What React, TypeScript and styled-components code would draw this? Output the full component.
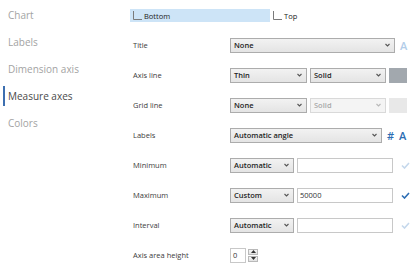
import React from 'react'
import styled, { createGlobalStyle } from 'styled-components'

const GlobalStyle = createGlobalStyle`
  html, body {
    margin: 0;
    padding: 0;
    background: #ffffff;
  }
  body {
    font-family: "Open Sans", "Liberation Sans", sans-serif;
  }
`

const Layout = styled.div`
  display: flex;
  width: 416px;
  height: 272px;
  overflow: hidden;
  background: #ffffff;
`

const Nav = styled.nav`
  width: 120px;
  flex-shrink: 0;
  padding-top: 2px;
  display: flex;
  flex-direction: column;
`

const NavItem = styled.div<{ $active?: boolean }>`
  position: relative;
  height: 27px;
  line-height: 27px;
  padding-left: 8px;
  font-size: 10px;
  color: ${props => (props.$active ? '#4a4a4a' : '#a3a3a3')};

  &::before {
    content: '';
    display: ${props => (props.$active ? 'block' : 'none')};
    position: absolute;
    left: 3px;
    top: 3px;
    width: 2px;
    height: 20px;
    background: #3d6fb0;
  }
`

const Panel = styled.section`
  flex: 1;
  padding-left: 10px;
  display: flex;
  flex-direction: column;
`

const TabRow = styled.div`
  display: flex;
  margin-top: 9px;
  height: 13px;
`

const Tab = styled.div<{ $selected?: boolean; $width: number }>`
  display: flex;
  align-items: center;
  gap: 2px;
  width: ${props => props.$width}px;
  padding-left: 3px;
  box-sizing: border-box;
  background: ${props => (props.$selected ? '#cde4f7' : 'transparent')};
  font-size: 7.5px;
  color: #222;
`

const Form = styled.div`
  display: grid;
  grid-template-columns: 100px 1fr;
  grid-auto-rows: 30px;
  margin-top: 8px;
`

const Label = styled.div`
  display: flex;
  align-items: center;
  padding-left: 3px;
  font-size: 7.5px;
  color: #3c3c3c;
`

const Controls = styled.div`
  display: flex;
  align-items: center;
  gap: 3px;
`

const Select = styled.div<{ $width: number; $disabled?: boolean }>`
  display: flex;
  align-items: center;
  justify-content: space-between;
  box-sizing: border-box;
  width: ${props => props.$width}px;
  height: 15px;
  padding: 0 4px 0 3px;
  border: 1px solid ${props => (props.$disabled ? '#d9d9d9' : '#acacac')};
  background: ${props =>
    props.$disabled ? '#f4f4f4' : 'linear-gradient(#f2f2f2, #e4e4e4)'};
  font-size: 7.5px;
  font-weight: 600;
  color: ${props => (props.$disabled ? '#a8a8a8' : '#1e1e1e')};
`

const TextInput = styled.div<{ $width: number }>`
  display: flex;
  align-items: center;
  box-sizing: border-box;
  width: ${props => props.$width}px;
  height: 15px;
  padding-left: 2px;
  border: 1px solid #c8c8c8;
  background: #ffffff;
  font-size: 7.5px;
  color: #333;
`

const Swatch = styled.div<{ $color: string }>`
  width: 18px;
  height: 15px;
  margin-left: 0;
  background: ${props => props.$color};
`

const Glyph = styled.span<{ $color: string }>`
  font-family: "Open Sans", "Liberation Sans", sans-serif;
  font-size: 11px;
  font-weight: 600;
  line-height: 15px;
  color: ${props => props.$color};
`

const SideIcon = styled.div`
  display: flex;
  align-items: center;
  gap: 5px;
  margin-left: 2px;
`

const Spinner = styled.div`
  display: flex;
  flex-direction: column;
  gap: 1px;
  margin-left: -1px;
`

const SpinButton = styled.div`
  display: flex;
  align-items: center;
  justify-content: center;
  width: 10px;
  height: 6px;
  box-sizing: border-box;
  border: 1px solid #b9b9b9;
  background: linear-gradient(#f6f6f6, #e2e2e2);
`

const Chevron = ({ color = '#555' }: { color?: string }) => (
  <svg width="5" height="4" viewBox="0 0 5 4">
    <polyline points="0.5,1 2.5,3 4.5,1" fill="none" stroke={color} strokeWidth="1.1" />
  </svg>
)

const Check = ({ color }: { color: string }) => (
  <svg width="9" height="7" viewBox="0 0 9 7" style={{ marginLeft: 5 }}>
    <polyline points="1,3.5 3.5,6 8,1" fill="none" stroke={color} strokeWidth="1.6" />
  </svg>
)

const Corner = () => (
  <svg width="9" height="9" viewBox="0 0 9 9">
    <polyline points="0.5,0 0.5,8.5 9,8.5" fill="none" stroke="#7a7a7a" strokeWidth="1" />
  </svg>
)

const Triangle = ({ up }: { up?: boolean }) => (
  <svg width="5" height="3" viewBox="0 0 5 3">
    <polygon points={up ? '0,3 5,3 2.5,0' : '0,0 5,0 2.5,3'} fill="#333" />
  </svg>
)

const Dropdown = ({ width, value, disabled }: { width: number; value: string; disabled?: boolean }) => (
  <Select $width={width} $disabled={disabled}>
    <span>{value}</span>
    <Chevron color={disabled ? '#b8b8b8' : '#555'} />
  </Select>
)

const navItems = ['Chart', 'Labels', 'Dimension axis', 'Measure axes', 'Colors']

const App: React.FC = () => {
  return (
    <>
      <GlobalStyle />
      <Layout>
        <Nav>
          {navItems.map(item => (
            <NavItem key={item} $active={item === 'Measure axes'}>
              {item}
            </NavItem>
          ))}
        </Nav>

        <Panel>
          <TabRow>
            <Tab $selected $width={140}>
              <Corner />
              Bottom
            </Tab>
            <Tab $width={40}>
              <Corner />
              Top
            </Tab>
          </TabRow>

          <Form>
            <Label>Title</Label>
            <Controls>
              <Dropdown width={165} value="None" />
              <SideIcon>
                <Glyph $color="#b3cde9">A</Glyph>
              </SideIcon>
            </Controls>

            <Label>Axis line</Label>
            <Controls>
              <Dropdown width={77} value="Thin" />
              <Dropdown width={76} value="Solid" />
              <Swatch $color="#a2a8ae" />
            </Controls>

            <Label>Grid line</Label>
            <Controls>
              <Dropdown width={77} value="None" />
              <Dropdown width={76} value="Solid" disabled />
              <Swatch $color="#e8e8e8" />
            </Controls>

            <Label>Labels</Label>
            <Controls>
              <Dropdown width={152} value="Automatic angle" />
              <SideIcon>
                <Glyph $color="#2c6db3">#</Glyph>
                <Glyph $color="#2c6db3">A</Glyph>
              </SideIcon>
            </Controls>

            <Label>Minimum</Label>
            <Controls>
              <Dropdown width={64} value="Automatic" />
              <TextInput $width={96} />
              <Check color="#c5d8ec" />
            </Controls>

            <Label>Maximum</Label>
            <Controls>
              <Dropdown width={64} value="Custom" />
              <TextInput $width={96}>50000</TextInput>
              <Check color="#2c6db3" />
            </Controls>

            <Label>Interval</Label>
            <Controls>
              <Dropdown width={64} value="Automatic" />
              <TextInput $width={96} />
              <Check color="#c5d8ec" />
            </Controls>

            <Label>Axis area height</Label>
            <Controls>
              <TextInput $width={16}>0</TextInput>
              <Spinner>
                <SpinButton>
                  <Triangle up />
                </SpinButton>
                <SpinButton>
                  <Triangle />
                </SpinButton>
              </Spinner>
            </Controls>
          </Form>
        </Panel>
      </Layout>
    </>
  )
}

export default App
